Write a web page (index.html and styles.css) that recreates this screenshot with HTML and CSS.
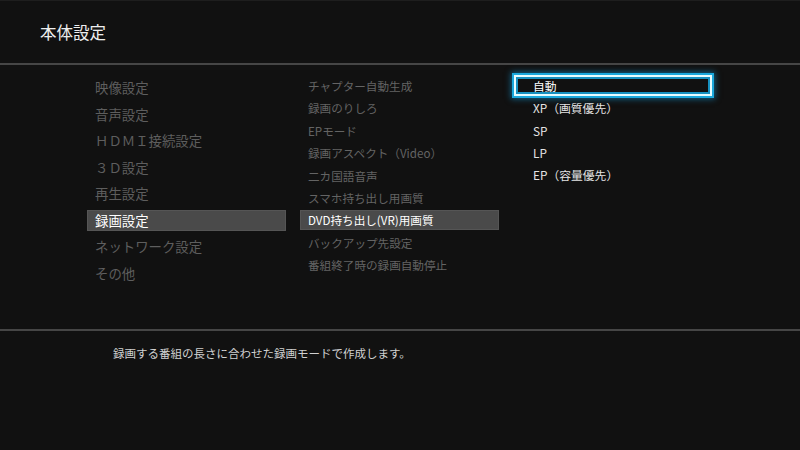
FILE: index.html
```html
<!DOCTYPE html>
<html lang="ja">
  <head>
    <meta name="viewport" content="width=device-width, initial-scale=1.0" />
    <link rel="stylesheet" href="styles.css">
  </head>
  <body>
    <div class="screen">
      <div class="header">
        <div class="title">本体設定</div>
      </div>

      <div class="main">
        <div class="menu">
          <div class="item">映像設定</div>
          <div class="item">音声設定</div>
          <div class="item">ＨＤＭＩ接続設定</div>
          <div class="item">３Ｄ設定</div>
          <div class="item">再生設定</div>
          <div class="item selected">録画設定</div>
          <div class="item">ネットワーク設定</div>
          <div class="item">その他</div>
        </div>

        <div class="submenu">
          <div class="sub">チャプター自動生成</div>
          <div class="sub">録画のりしろ</div>
          <div class="sub">EPモード</div>
          <div class="sub">録画アスペクト（Video）</div>
          <div class="sub">二カ国語音声</div>
          <div class="sub">スマホ持ち出し用画質</div>
          <div class="sub selected">DVD持ち出し(VR)用画質</div>
          <div class="sub">バックアップ先設定</div>
          <div class="sub">番組終了時の録画自動停止</div>
        </div>

        <div class="options">
          <div class="option focus">自動</div>
          <div class="option">XP（画質優先）</div>
          <div class="option">SP</div>
          <div class="option">LP</div>
          <div class="option">EP（容量優先）</div>
        </div>
      </div>

      <div class="footer">
        <div class="help">録画する番組の長さに合わせた録画モードで作成します。</div>
      </div>
    </div>
  </body>
</html>
```

FILE: styles.css
```css
body {
  margin: 0;
  background-color: #111;
  font-family: "Noto Sans CJK JP", "Noto Sans", sans-serif;
}

.screen {
  width: 800px;
  height: 450px;
  overflow: hidden;
  background-color: #111;
  border-top: 1px solid #1e1e1e;
  box-sizing: border-box;
}

/* top title bar */
.header {
  height: 62px;
  border-bottom: 2px solid #464646;
}

.title {
  padding-left: 40px;
  line-height: 62px;
  font-size: 16.5px;
  color: #eee;
}

/* three columns */
.main {
  height: 264px;
  display: flex;
  align-items: flex-start;
  border-bottom: 2px solid #464646;
}

.menu {
  width: 199px;
  margin-left: 87px;
  margin-top: 12px;
  display: flex;
  flex-direction: column;
  gap: 5.5px;
}

.item {
  height: 21px;
  line-height: 21px;
  padding-left: 8px;
  font-size: 13.4px;
  color: #5e5e5e;
  white-space: nowrap;
}

.submenu {
  width: 199px;
  margin-left: 14px;
  margin-top: 11px;
  display: flex;
  flex-direction: column;
  gap: 2.4px;
}

.sub {
  height: 20px;
  line-height: 20px;
  padding-left: 8px;
  font-size: 11.6px;
  color: #646464;
  white-space: nowrap;
}

.selected {
  background-color: #4a4a4a;
  box-shadow: inset 0 0 0 1px #555;
  color: #fff;
}

.options {
  width: 198px;
  margin-left: 15px;
  margin-top: 10px;
  display: flex;
  flex-direction: column;
  gap: 1.3px;
}

.option {
  height: 21px;
  line-height: 21px;
  padding-left: 19px;
  font-size: 11.8px;
  color: #e4e4e4;
  box-sizing: border-box;
  white-space: nowrap;
}

.focus {
  border: 2px solid #e6fcff;
  padding-left: 17px;
  line-height: 17px;
  color: #fff;
  box-shadow: 0 0 0 2px #1aa8dc, 0 0 6px 3px rgba(20, 150, 210, 0.6),
    inset 0 0 0 2px #1690c0;
}

/* help text */
.footer {
  padding-top: 14px;
}

.help {
  padding-left: 113px;
  line-height: 16px;
  font-size: 11.5px;
  color: #d0d0d0;
}
```
